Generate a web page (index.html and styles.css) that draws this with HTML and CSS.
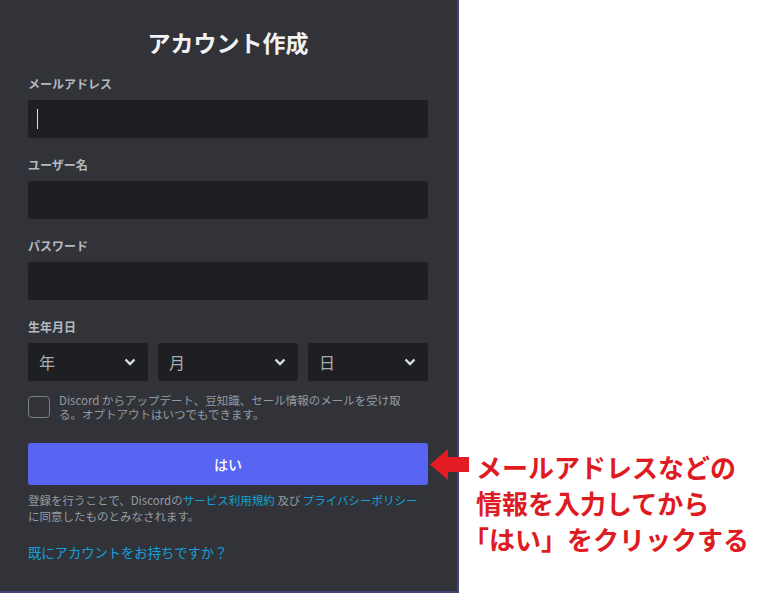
FILE: index.html
```html
<!DOCTYPE html>
<html lang="ja">

<head>
    <meta charset="UTF-8">
    <meta name="viewport" content="width=device-width, initial-scale=1.0">
    <title>アカウント作成</title>
    <link rel="stylesheet" href="styles.css">
</head>

<body>
    <div class="register-panel">
        <h1 class="register-title">アカウント作成</h1>

        <div class="field">
            <label class="field-label" for="email">メールアドレス</label>
            <div class="input-wrap">
                <input type="text" id="email" class="text-input">
                <span class="caret"></span>
            </div>
        </div>

        <div class="field">
            <label class="field-label" for="username">ユーザー名</label>
            <input type="text" id="username" class="text-input">
        </div>

        <div class="field">
            <label class="field-label" for="password">パスワード</label>
            <input type="password" id="password" class="text-input">
        </div>

        <div class="field field-birth">
            <div class="field-label">生年月日</div>
            <div class="birth-row">
                <div class="select-box">
                    <span>年</span>
                    <svg class="chevron" viewBox="0 0 12 8" width="12" height="8">
                        <path d="M1.5 1.5 L6 6 L10.5 1.5" fill="none" stroke="#dbdee1" stroke-width="2.4" />
                    </svg>
                </div>
                <div class="select-box">
                    <span>月</span>
                    <svg class="chevron" viewBox="0 0 12 8" width="12" height="8">
                        <path d="M1.5 1.5 L6 6 L10.5 1.5" fill="none" stroke="#dbdee1" stroke-width="2.4" />
                    </svg>
                </div>
                <div class="select-box">
                    <span>日</span>
                    <svg class="chevron" viewBox="0 0 12 8" width="12" height="8">
                        <path d="M1.5 1.5 L6 6 L10.5 1.5" fill="none" stroke="#dbdee1" stroke-width="2.4" />
                    </svg>
                </div>
            </div>
        </div>

        <div class="consent-row">
            <span class="checkbox"></span>
            <p class="consent-text">Discord からアップデート、豆知識、セール情報のメールを受け取る。オプトアウトはいつでもできます。</p>
        </div>

        <button class="submit-button">はい</button>

        <p class="terms">登録を行うことで、Discordの<a href="#">サービス利用規約</a> 及び <a href="#">プライバシーポリシー</a>に同意したものとみなされます。</p>

        <a class="login-link" href="#">既にアカウントをお持ちですか？</a>
    </div>

    <!-- annotation callout over the screenshot -->
    <div class="callout">
        <svg class="callout-arrow" viewBox="0 0 40 32" width="40" height="32">
            <polygon points="0,15.5 18,0 18,8 39,8 39,23 18,23 18,31" fill="#e31b23" />
        </svg>
        <div class="callout-text">
            <div>メールアドレスなどの</div>
            <div>情報を入力してから</div>
            <div>「はい」をクリックする</div>
        </div>
    </div>
</body>

</html>
```

FILE: styles.css
```css
/* Variables */
:root {
    --panel-bg: #313338;
    --input-bg: #1e1f22;
    --label-color: #b5bac1;
    --muted-color: #949ba4;
    --link-color: #14a0dc;
    --brand-color: #5865f2;
    --callout-red: #de1b22;
}

/* Global Styles */
body {
    margin: 0;
    background: #fff;
    position: relative;
    font-family: "Noto Sans CJK JP", "Noto Sans", sans-serif;
}

.register-panel {
    box-sizing: border-box;
    width: 459px;
    height: 593px;
    padding: 27px 29px 0 28px;
    background: var(--panel-bg);
    border-right: 2px solid #45437a;
    border-bottom: 2px solid #45437a;
}

.register-title {
    margin: 0 0 19px;
    font-size: 23px;
    line-height: 30px;
    font-weight: 700;
    text-align: center;
    color: #f2f3f5;
}

/* Form fields */
.field {
    margin-bottom: 19px;
}

.field-birth {
    margin-bottom: 12px;
}

.field-label {
    display: block;
    margin-bottom: 8px;
    font-size: 12px;
    line-height: 16px;
    font-weight: 700;
    color: var(--label-color);
}

.input-wrap {
    position: relative;
}

.text-input {
    display: block;
    box-sizing: border-box;
    width: 100%;
    height: 38px;
    padding: 0 10px;
    border: none;
    border-radius: 3px;
    background: var(--input-bg);
    outline: none;
}

.caret {
    position: absolute;
    left: 9px;
    top: 9px;
    width: 1px;
    height: 20px;
    background: #dbdee1;
}

.birth-row {
    display: grid;
    grid-template-columns: 120px 1fr 120px;
    gap: 10px;
}

.select-box {
    display: flex;
    align-items: center;
    justify-content: space-between;
    height: 38px;
    padding: 0 12px 0 11px;
    border-radius: 3px;
    background: var(--input-bg);
    font-size: 16px;
    color: #a9acb2;
}

.chevron {
    display: block;
}

/* Consent */
.consent-row {
    display: flex;
    align-items: center;
    gap: 9px;
}

.checkbox {
    box-sizing: border-box;
    flex: none;
    width: 22px;
    height: 22px;
    border: 1px solid #7c7f87;
    border-radius: 4px;
}

.consent-text {
    max-width: 345px;
    margin: 0;
    font-size: 11.5px;
    line-height: 14px;
    color: var(--muted-color);
}

/* Button */
.submit-button {
    display: block;
    width: 100%;
    height: 42px;
    margin-top: 22px;
    border: none;
    border-radius: 3px;
    background: var(--brand-color);
    color: #fff;
    font-family: inherit;
    font-size: 14px;
    font-weight: 500;
    cursor: pointer;
}

.terms {
    margin: 7px 0 0;
    font-size: 11.5px;
    line-height: 16px;
    color: var(--muted-color);
}

.terms a,
.login-link {
    color: var(--link-color);
    text-decoration: none;
}

.login-link {
    display: block;
    margin-top: 20px;
    font-size: 13.3px;
    line-height: 18px;
}

/* Callout */
.callout {
    position: absolute;
    left: 430px;
    top: 449px;
    display: flex;
    align-items: flex-start;
    gap: 6px;
}

.callout-arrow {
    display: block;
}

.callout-text {
    font-size: 26px;
    line-height: 36px;
    font-weight: 700;
    color: var(--callout-red);
    text-spacing-trim: trim-start;
}
```
